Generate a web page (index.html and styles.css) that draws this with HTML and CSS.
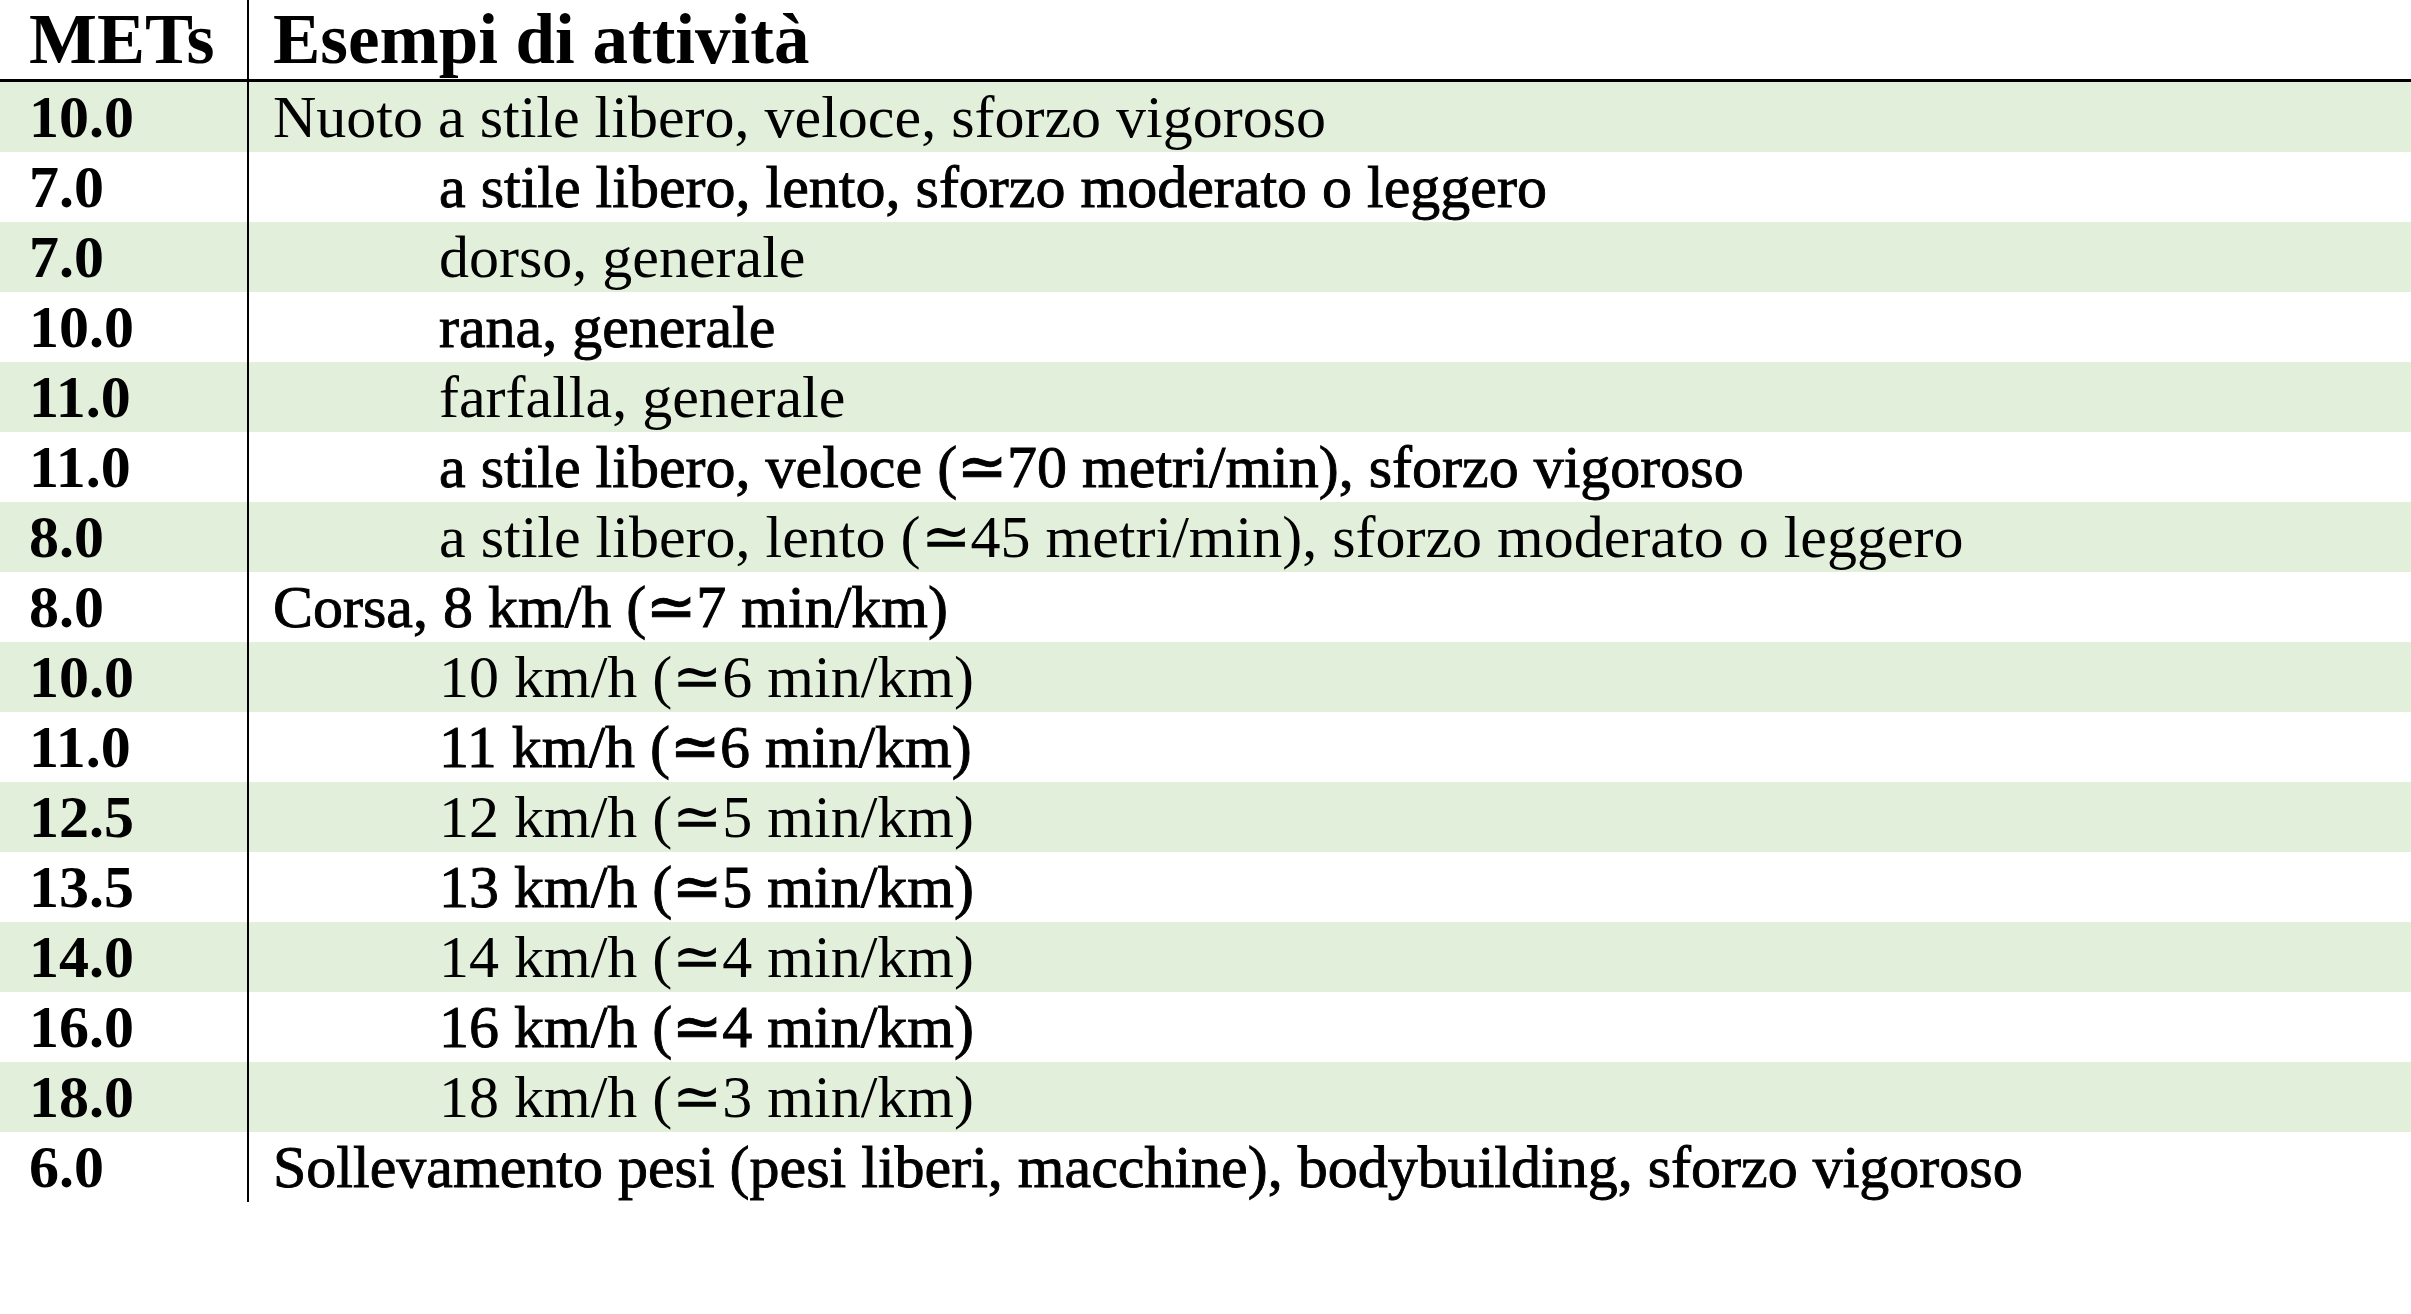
FILE: index.html
```html
<!DOCTYPE html>
<html lang="it">
<head>
<meta charset="utf-8">
<title>METs</title>
<link rel="stylesheet" href="styles.css">
</head>
<body>
<table class="mets">
  <thead>
    <tr><th class="val">METs</th><th class="act">Esempi di attività</th></tr>
  </thead>
  <tbody>
    <tr class="g"><td class="val">10.0</td><td class="act">Nuoto a stile libero, veloce, sforzo vigoroso</td></tr>
    <tr><td class="val">7.0</td><td class="act sub">a stile libero, lento, sforzo moderato o leggero</td></tr>
    <tr class="g"><td class="val">7.0</td><td class="act sub">dorso, generale</td></tr>
    <tr><td class="val">10.0</td><td class="act sub">rana, generale</td></tr>
    <tr class="g"><td class="val">11.0</td><td class="act sub">farfalla, generale</td></tr>
    <tr><td class="val">11.0</td><td class="act sub">a stile libero, veloce (≃70 metri/min), sforzo vigoroso</td></tr>
    <tr class="g"><td class="val">8.0</td><td class="act sub">a stile libero, lento (≃45 metri/min), sforzo moderato o leggero</td></tr>
    <tr><td class="val">8.0</td><td class="act">Corsa, 8 km/h (≃7 min/km)</td></tr>
    <tr class="g"><td class="val">10.0</td><td class="act sub">10 km/h (≃6 min/km)</td></tr>
    <tr><td class="val">11.0</td><td class="act sub">11 km/h (≃6 min/km)</td></tr>
    <tr class="g"><td class="val">12.5</td><td class="act sub">12 km/h (≃5 min/km)</td></tr>
    <tr><td class="val">13.5</td><td class="act sub">13 km/h (≃5 min/km)</td></tr>
    <tr class="g"><td class="val">14.0</td><td class="act sub">14 km/h (≃4 min/km)</td></tr>
    <tr><td class="val">16.0</td><td class="act sub">16 km/h (≃4 min/km)</td></tr>
    <tr class="g"><td class="val">18.0</td><td class="act sub">18 km/h (≃3 min/km)</td></tr>
    <tr><td class="val">6.0</td><td class="act">Sollevamento pesi (pesi liberi, macchine), bodybuilding, sforzo vigoroso</td></tr>
  </tbody>
</table>
</body>
</html>
```
FILE: styles.css
```css
html, body {
  margin: 0;
  padding: 0;
  background: #ffffff;
}
body {
  font-family: "Liberation Serif", "Times New Roman", serif;
  color: #000;
}
.mets {
  width: 100%;
  border-collapse: collapse;
  border-spacing: 0;
}
.mets th {
  font-size: 72px;
  font-weight: bold;
  text-align: left;
  height: 79px;
  line-height: 79px;
  padding: 0;
  border-bottom: 3px solid #000;
  white-space: nowrap;
}
.mets th.act {
  font-size: 71px;
}
.mets td {
  font-size: 60px;
  height: 70px;
  line-height: 70px;
  padding: 0;
  white-space: nowrap;
}
.mets tr.g td {
  background: #e2efda;
}
.mets tbody tr:not(.g) td.act {
  -webkit-text-stroke: 0.9px #000;
}
.val {
  width: 218px;
  padding-left: 29px !important;
  border-right: 2px solid #000;
  font-weight: bold;
}
.act {
  padding-left: 24px !important;
}
.act.sub {
  padding-left: 190px !important;
}
```
